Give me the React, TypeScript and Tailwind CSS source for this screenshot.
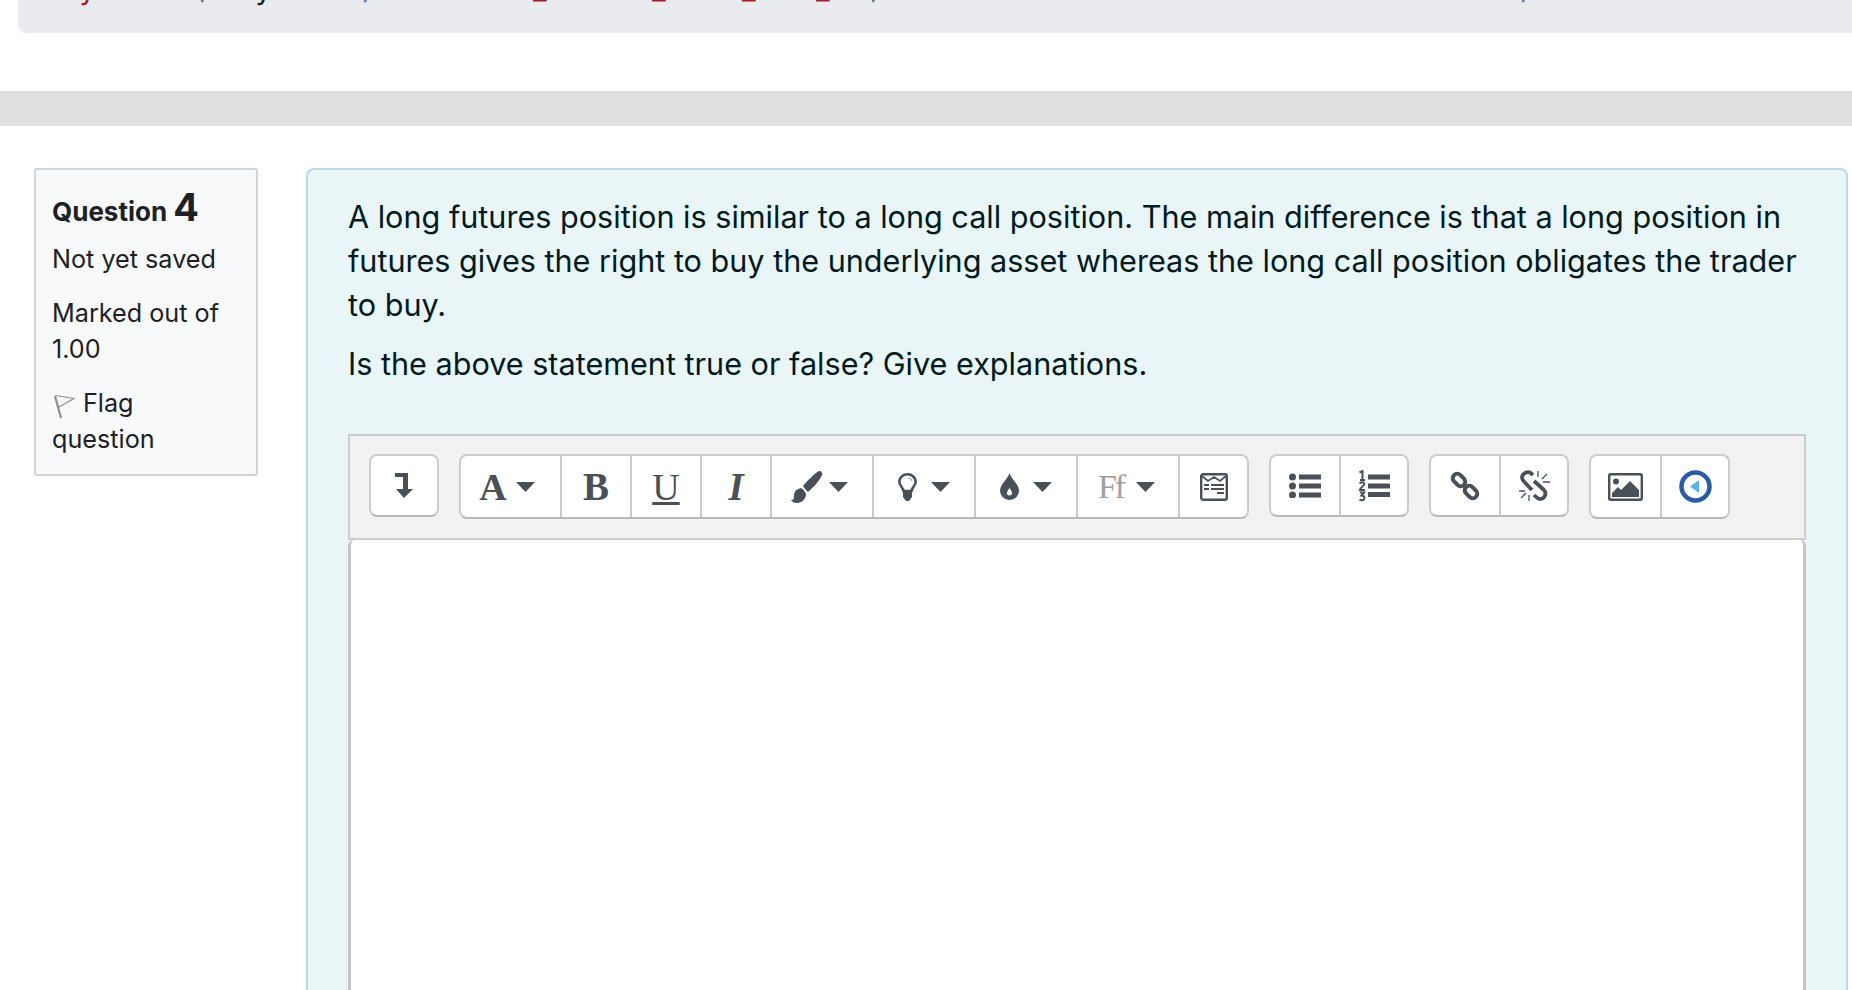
import type { ReactNode } from "react";

const ink = "#495057";

function Caret() {
  return (
    <svg width="19" height="10" viewBox="0 0 19 10" className="shrink-0">
      <path d="M0 0H19L9.500 10Z" fill={ink} />
    </svg>
  );
}

function TurnDown() {
  return (
    <svg width="18" height="25" viewBox="0 0 18 25">
      <path d="M0 0H13V16H18L9 25L1 16H8V4H0Z" fill={ink} />
    </svg>
  );
}

function Brush() {
  return (
    <svg width="32" height="32" viewBox="0 0 32 32">
      <path d="M28 0C30 0 32 2 31 4C29 9 22 17 17 21C15 19 13 17 12 15C16 10 24 2 28 0Z" fill={ink} />
      <path d="M10 17C12 18 14 20 15 23C15 28 11 32 6 32C3 32 1 31 0 29C3 29 3 27 3 25C3 20 6 18 10 17Z" fill={ink} />
    </svg>
  );
}

function Bulb() {
  return (
    <svg width="19" height="28" viewBox="0 0 19 28">
      <path
        d="M5.500 18C5 14 1.300 13 1.300 8.500C1.300 4.500 5 1.300 9.500 1.300C14 1.300 17.700 4.500 17.700 8.500C17.700 13 14 14 13.500 18Z"
        fill="none"
        stroke={ink}
        strokeWidth="2.600"
      />
      <path d="M5 17.500H14V24L11 28H8L5 24Z" fill={ink} />
      <path d="M10 5C12 5 14 6.500 14 8.500" fill="none" stroke="#9aa0a6" strokeWidth="1.200" />
    </svg>
  );
}

function Drop() {
  return (
    <svg width="19" height="27" viewBox="0 0 19 27">
      <path d="M9.500 0C11 6 19 11 19 18A9.500 9 0 0 1 0 18C0 11 8 6 9.500 0Z" fill={ink} />
      <path d="M9.500 15C10.500 17 12 18 12 20A2.500 2.500 0 0 1 7 20C7 18 8.500 17 9.500 15Z" fill="#fff" />
    </svg>
  );
}

function Template() {
  return (
    <svg width="28" height="28" viewBox="0 0 28 28">
      <rect x="1.200" y="1.200" width="25.600" height="25.600" rx="2" fill="none" stroke={ink} strokeWidth="2.400" />
      <path d="M2 3L8 8L14 4L20 8L26 3" fill="none" stroke={ink} strokeWidth="1.800" />
      <path d="M4 12H9M11 12H24M4 16H9M11 16H24M17 20H24" stroke={ink} strokeWidth="2" />
    </svg>
  );
}

function BulletList() {
  return (
    <svg width="32" height="25" viewBox="0 0 32 25">
      <circle cx="3.500" cy="4" r="3.500" fill={ink} />
      <circle cx="3.500" cy="13" r="3.500" fill={ink} />
      <circle cx="3.500" cy="22" r="3.500" fill={ink} />
      <path d="M10 1.500H32V6.500H10ZM10 10.500H32V15.500H10ZM10 19.500H32V24.500H10Z" fill={ink} />
    </svg>
  );
}

function NumberList() {
  return (
    <svg width="32" height="32" viewBox="0 0 32 32">
      <path d="M10 4.500H32V9.500H10ZM10 13.500H32V18.500H10ZM10 22H32V27H10Z" fill={ink} />
      <path d="M1.500 2.500L4.500 1V10M2 10H7" fill="none" stroke={ink} strokeWidth="2" />
      <path d="M1.500 13.500C3 11.500 6.300 12 6.300 14C6.300 16 2 17.500 1.800 20H7" fill="none" stroke={ink} strokeWidth="2" />
      <path d="M1.800 22.500H6L3.500 25.500C6 25.500 6.500 27 6.500 28C6.500 30.500 3 31 1.500 29.500" fill="none" stroke={ink} strokeWidth="2" />
    </svg>
  );
}

function ChainLink() {
  return (
    <svg width="30" height="30" viewBox="0 0 30 30">
      <rect x="2" y="4.500" width="14" height="9" rx="4.500" transform="rotate(45 9 9)" fill="none" stroke={ink} strokeWidth="4" />
      <rect x="14" y="16.500" width="14" height="9" rx="4.500" transform="rotate(45 21 21)" fill="none" stroke={ink} strokeWidth="4" />
    </svg>
  );
}

function BrokenLink() {
  return (
    <svg width="31" height="31" viewBox="0 0 31 31">
      <path d="M14 5L11 2.500C8 1 3 4 3 7.500C3 9 4 10.500 5 11.500L13 20" fill="none" stroke={ink} strokeWidth="3.800" />
      <path d="M15 11L25 20C28 23 26 29 21 29C19 29 18 28 15 25" fill="none" stroke={ink} strokeWidth="3.800" />
      <path d="M19 1V7M23 9L28 4M24 12H31M0 21H6M7 23L2 28M10 25V31" stroke={ink} strokeWidth="1.300" />
    </svg>
  );
}

function ImageIcon() {
  return (
    <svg width="35" height="28" viewBox="0 0 35 28">
      <rect x="1.200" y="1.200" width="32.600" height="25.600" rx="1.500" fill="none" stroke={ink} strokeWidth="2.400" />
      <circle cx="8" cy="8.500" r="3" fill={ink} />
      <path d="M4 24V20L10 14L13 17L22 8L31 17V24Z" fill={ink} />
    </svg>
  );
}

function MediaIcon() {
  return (
    <svg width="33" height="33" viewBox="0 0 33 33">
      <circle cx="16.500" cy="16.500" r="14" fill="#fff" stroke="#2a5ca4" strokeWidth="4.500" />
      <path d="M11 16.500L20 10V23Z" fill="#5ab4ea" />
    </svg>
  );
}

function SerifGlyph({ children, className }: { children: ReactNode; className: string }) {
  return <span className={`font-['Liberation_Serif',serif] leading-none ${className}`}>{children}</span>;
}

function ToolButton({
  width,
  last,
  extra,
  children,
}: {
  width: string;
  last?: boolean;
  extra?: string;
  children: ReactNode;
}) {
  return (
    <div className={`flex items-center justify-center ${width} ${extra ?? ""} ${last ? "" : "border-r-2 border-[#ccc]"}`}>
      {children}
    </div>
  );
}

function ToolGroup({ height, children }: { height: string; children: ReactNode }) {
  return (
    <div className={`flex shrink-0 rounded-[8px] border-2 border-[#ccc] border-b-[#b8b8b8] bg-white ${height}`}>
      {children}
    </div>
  );
}

function Toolbar() {
  return (
    <div className="flex h-[106px] items-start gap-5 border-2 border-[#ccc] bg-[#f2f2f2] pt-[18px] pl-[19px]">
      <ToolGroup height="h-[63px]">
        <ToolButton width="w-[66px]" last>
          <TurnDown />
        </ToolButton>
      </ToolGroup>
      <ToolGroup height="h-[65px]">
        <ToolButton width="w-[101px]" extra="gap-[9px] pr-[7px]">
          <SerifGlyph className="text-[38px] font-bold text-[#495057]">A</SerifGlyph>
          <Caret />
        </ToolButton>
        <ToolButton width="w-[70px]">
          <SerifGlyph className="text-[39px] font-bold text-[#495057]">B</SerifGlyph>
        </ToolButton>
        <ToolButton width="w-[70px]">
          <SerifGlyph className="text-[38px] text-[#495057] underline decoration-[3px] underline-offset-2">U</SerifGlyph>
        </ToolButton>
        <ToolButton width="w-[70px]">
          <SerifGlyph className="text-[39px] font-bold text-[#495057] italic">I</SerifGlyph>
        </ToolButton>
        <ToolButton width="w-[102px]" extra="gap-[6px] pr-[6px]">
          <Brush />
          <Caret />
        </ToolButton>
        <ToolButton width="w-[102px]" extra="gap-[14px]">
          <Bulb />
          <Caret />
        </ToolButton>
        <ToolButton width="w-[102px]" extra="gap-[14px]">
          <Drop />
          <Caret />
        </ToolButton>
        <ToolButton width="w-[102px]" extra="gap-[12px] pr-[3px]">
          <SerifGlyph className="text-[34px] tracking-[-2px] text-[#a0a0a0]">Ff</SerifGlyph>
          <Caret />
        </ToolButton>
        <ToolButton width="w-[67px]" last>
          <Template />
        </ToolButton>
      </ToolGroup>
      <ToolGroup height="h-[63px]">
        <ToolButton width="w-[70px]">
          <BulletList />
        </ToolButton>
        <ToolButton width="w-[66px]" last>
          <NumberList />
        </ToolButton>
      </ToolGroup>
      <ToolGroup height="h-[63px]">
        <ToolButton width="w-[70px]">
          <ChainLink />
        </ToolButton>
        <ToolButton width="w-[66px]" last>
          <BrokenLink />
        </ToolButton>
      </ToolGroup>
      <ToolGroup height="h-[65px]">
        <ToolButton width="w-[71px]">
          <ImageIcon />
        </ToolButton>
        <ToolButton width="w-[66px]" last>
          <MediaIcon />
        </ToolButton>
      </ToolGroup>
    </div>
  );
}

// only the bottom few pixels of this strip are on screen
function Breadcrumb() {
  return (
    <div className="ml-[18px] h-[33px] overflow-hidden rounded-bl-[8px] bg-[#eaebef]">
      <div className="mt-[-31px] flex h-[38px] items-end pl-[34px] text-[30px] leading-[38px] whitespace-nowrap">
        <span className="w-[148px] text-[#a5212f]">My home</span>
        <span className="w-[28px] text-[#6c757d]">/</span>
        <span className="w-[135px] text-[#1d2125]">My units</span>
        <span className="w-[47px] text-[#6c757d]">/</span>
        <span className="w-[123px] text-[#a5212f]">FINA23</span>
        <span className="w-[119px] text-[#a5212f]">_Sem1</span>
        <span className="w-[90px] text-[#a5212f]">_S2</span>
        <span className="w-[74px] text-[#a5212f]">_T1</span>
        <span className="w-[55px] text-[#a5212f]">_T2</span>
        <span className="w-[29px] text-[#6c757d]">/</span>
        <span className="w-[621px] text-[#6c757d]">Final Assessment Items to Students</span>
        <span className="w-[40px] text-[#6c757d]">/</span>
        <span className="text-[#a5212f]">Final exam</span>
      </div>
    </div>
  );
}

function QuestionInfo() {
  return (
    <aside className="h-[308px] w-[224px] shrink-0 rounded-[3px] border-2 border-[#ced4da] bg-[#f8f9fa] pt-[19px] pl-[16px] text-[25.200px] leading-[36px] text-[#1d2125]">
      <h3 className="flex items-baseline gap-[6px] text-[26px] font-bold">
        <span>Question</span>
        <span className="text-[38px] leading-[36px]">4</span>
      </h3>
      <p className="mt-[11px]">Not yet saved</p>
      <p className="mt-[18px]">
        Marked out of
        <br />
        1.00
      </p>
      <p className="mt-[18px]">
        <svg width="22" height="25" viewBox="0 0 22 25" className="mr-[7px] ml-[2px] inline-block align-[-7px]">
          <path d="M1 2L7 24" stroke="#8a8f94" strokeWidth="2.200" />
          <path d="M1.500 1.500L20 4.500L5 13" fill="none" stroke="#8a8f94" strokeWidth="1.200" />
        </svg>
        Flag
        <br />
        question
      </p>
    </aside>
  );
}

export default function App() {
  return (
    <div className="h-[990px] overflow-hidden bg-white font-['Inter',sans-serif]">
      <Breadcrumb />
      <div className="mt-[58px] h-[35px] bg-[#dfdfdf]" />
      <div className="mt-[42px] flex items-start gap-[48px] pl-[34px]">
        <QuestionInfo />
        <main className="h-[900px] w-[1542px] shrink-0 rounded-t-[8px] border-2 border-[#b8dce2] bg-[#e9f5f7] pt-[25px] pr-[40px] pl-[40px] text-[#001a1e]">
          <p className="text-[30.600px] leading-[44px]">
            A long futures position is similar to a long call position. The main difference is that a long position in
            futures gives the right to buy the underlying asset whereas the long call position obligates the trader to
            buy.
          </p>
          <p className="mt-[15px] text-[30.600px] leading-[44px]">
            Is the above statement true or false? Give explanations.
          </p>
          <div className="mt-[48px]">
            <Toolbar />
            <div className="h-[500px] rounded-t-[6px] border-x-[3px] border-x-[#c4c4c4] bg-white" />
          </div>
        </main>
      </div>
    </div>
  );
}
